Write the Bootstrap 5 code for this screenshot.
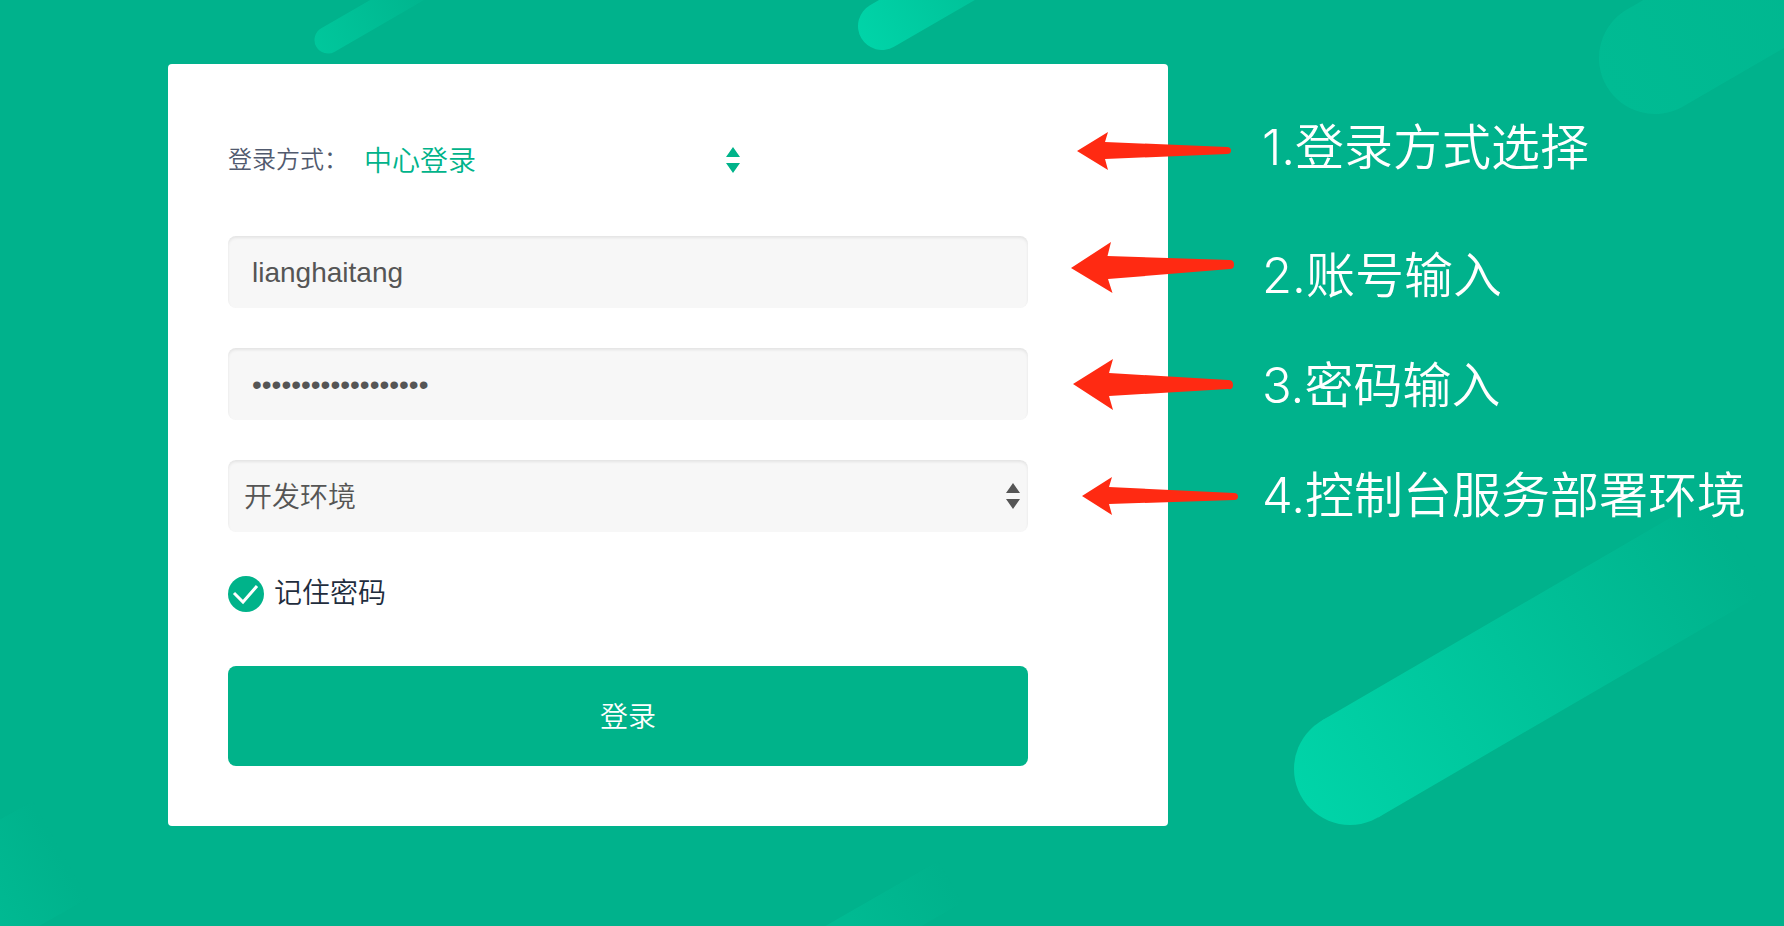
<!DOCTYPE html>
<html lang="zh-CN">
<head>
<meta charset="utf-8">
<meta name="viewport" content="width=device-width, initial-scale=1">
<title>登录</title>
<link href="https://cdn.jsdelivr.net/npm/bootstrap@5.3.0/dist/css/bootstrap.min.css" rel="stylesheet">
<style>
  :root { --brand: #00b38a; --field: #f7f7f7; }
  body { background: #00b28c; font-family: "Liberation Sans", "Noto Sans CJK SC", sans-serif; font-weight: 350; }
  .backdrop { z-index: -1; }
  .page { padding: 64px 24px 64px 168px; }
  .login-panel { flex: 0 1 1000px; min-width: 0; padding: 60px; border-radius: 4px; }
  .login-form { max-width: 800px; }
  .field-stack { gap: 40px; }
  .mode-row { height: 72px; }
  .mode-label { font-size: 24px; color: #515a6e; }
  .mode-select, .login-field, .remember, .login-btn { font-size: 28px; font-weight: 350; line-height: 40px; }
  .mode-select {
    width: 400px; padding: 4px 32px 0 16px; border: 0; color: var(--brand);
    background: transparent url("data:image/svg+xml,%3Csvg xmlns='http://www.w3.org/2000/svg' viewBox='0 0 14 26'%3E%3Cpath fill='%2300b38a' d='M7 0l7 10H0zM7 26l7-10H0z'/%3E%3C/svg%3E") no-repeat right 8px center / 14px 26px;
  }
  .login-field {
    height: 72px; padding: 2px 24px 0; border: 0; border-radius: 8px; color: #555;
    background-color: var(--field); box-shadow: inset 0 2px 3px rgba(0,0,0,.08);
  }
  .login-field:focus { background-color: var(--field); color: #555; }
  select.login-field {
    padding: 4px 32px 0 16px;
    background-image: url("data:image/svg+xml,%3Csvg xmlns='http://www.w3.org/2000/svg' viewBox='0 0 14 26'%3E%3Cpath fill='%23555' d='M7 0l7 10H0zM7 26l7-10H0z'/%3E%3C/svg%3E");
    background-position: right 8px center; background-size: 14px 26px;
  }
  .remember { height: 44px; gap: 10px; color: #1f2d3d; }
  .remember .form-check-input { width: 36px; height: 36px; margin: 0; border: 1px solid var(--brand); border-radius: 50%; }
  .remember .form-check-input:checked {
    border: 0; background-color: var(--brand); background-size: 36px 36px;
    background-image: url("data:image/svg+xml,%3Csvg xmlns='http://www.w3.org/2000/svg' viewBox='0 0 36 36'%3E%3Cpath fill='none' stroke='%23fff' stroke-width='3' d='M6 17l9 9L29 10'/%3E%3C/svg%3E");
  }
  .login-btn { height: 100px; margin-top: 10px; padding-top: 10px; border: 0; border-radius: 8px; color: #fff; background: var(--brand); }
  .login-btn:hover { color: #fff; background: #00a57f; }
  .notes { z-index: 1; flex: none; margin: 29px 0 0 -97px; font-size: 49px; line-height: 110px; font-family: Inter, "Noto Sans CJK SC", sans-serif; }
  .notes li { height: 110px; gap: 23px; }
  .notes li:first-child { margin-bottom: 18px; }
  .notes svg { width: 168px; height: 80px; fill: #ff2a12; flex: none; }
</style>
</head>
<body>
<svg class="backdrop position-fixed top-0 start-0 w-100 h-100" viewBox="0 0 1784 926" preserveAspectRatio="xMidYMid slice" aria-hidden="true">
  <defs>
    <linearGradient id="gBig" gradientUnits="userSpaceOnUse" x1="1302" y1="797" x2="1730" y2="547"><stop stop-color="#00d4a8"/><stop offset="1" stop-color="#00b28c"/></linearGradient>
    <linearGradient id="gTop" gradientUnits="userSpaceOnUse" x1="861" y1="38" x2="1060" y2="-76"><stop stop-color="#00d4a8"/><stop offset="1" stop-color="#00b28c"/></linearGradient>
    <linearGradient id="gSmall" gradientUnits="userSpaceOnUse" x1="316" y1="47" x2="436" y2="-22"><stop stop-color="#00c79c"/><stop offset="1" stop-color="#00b28c"/></linearGradient>
    <linearGradient id="gCorner" gradientUnits="userSpaceOnUse" x1="1606" y1="86" x2="1900" y2="-84"><stop stop-color="#00bb93"/><stop offset="1" stop-color="#00b58e"/></linearGradient>
    <linearGradient id="gLeft" gradientUnits="userSpaceOnUse" x1="-50" y1="917" x2="60" y2="856"><stop stop-color="#00bd95"/><stop offset="1" stop-color="#00b28c"/></linearGradient>
    <linearGradient id="gBottom" gradientUnits="userSpaceOnUse" x1="860" y1="936" x2="950" y2="884"><stop stop-color="#00ba92"/><stop offset="1" stop-color="#00b28c"/></linearGradient>
  </defs>
  <g fill="none" stroke-linecap="round">
    <path stroke="url(#gBig)" stroke-width="112" stroke-linecap="butt" d="M1350 769L1740 542"/>
    <circle cx="1350" cy="769" r="56" fill="url(#gBig)"/>
    <path stroke="url(#gTop)" stroke-width="48" d="M882 26L1060-77"/>
    <path stroke="url(#gSmall)" stroke-width="27" d="M328 40L430-19"/>
    <path stroke="url(#gCorner)" stroke-width="112" d="M1655 58L1900-84"/>
    <path stroke="url(#gLeft)" stroke-width="112" stroke-linecap="butt" d="M-150 968L60 850"/>
    <path stroke="url(#gBottom)" stroke-width="48" stroke-linecap="butt" d="M790 974L950 882"/>
  </g>
</svg>

<main class="page d-flex align-items-start">
  <section class="login-panel bg-white">
    <form class="login-form field-stack d-flex flex-column">
      <div class="mode-row d-flex align-items-center">
        <label class="mode-label" for="mode">登录方式：</label>
        <select class="mode-select form-select" id="mode"><option>中心登录</option></select>
      </div>
      <input class="login-field form-control" type="text" value="lianghaitang" aria-label="账号" autocomplete="username">
      <input class="login-field form-control" type="password" value="abcdefghijklmnopqr" aria-label="密码" autocomplete="current-password">
      <select class="login-field form-select" aria-label="环境"><option>开发环境</option></select>
      <div class="remember d-flex align-items-center">
        <input class="form-check-input" type="checkbox" id="remember" checked>
        <label for="remember">记住密码</label>
      </div>
      <button class="login-btn btn w-100" type="submit">登录</button>
    </form>
  </section>

  <ul class="notes list-unstyled text-white text-nowrap mb-0">
    <li class="d-flex align-items-center">
      <svg viewBox="0 0 168 80" aria-hidden="true"><path d="M6 43L37 24L34 34L156 39Q160 39 160 42.500T156 46L34 51L37 62Z"/></svg>
      <span>1.登录方式选择</span>
    </li>
    <li class="d-flex align-items-center">
      <svg viewBox="0 0 168 80" aria-hidden="true"><path d="M0 32L40 6L36.500 20L159 24Q163 24 163 28.500T159 33L37 43L41.500 57Z"/></svg>
      <span>2.账号输入</span>
    </li>
    <li class="d-flex align-items-center">
      <svg viewBox="0 0 168 80" aria-hidden="true"><path d="M2 38L42 13L38 27L157 34Q162 34 162 39T157 43L38 50L42 64Z"/></svg>
      <span>3.密码输入</span>
    </li>
    <li class="d-flex align-items-center">
      <svg viewBox="0 0 168 80" aria-hidden="true"><path d="M11 40L41 21L38 31L163 37Q167 37 167 40.500T163 44L38 48L41 59Z"/></svg>
      <span>4.控制台服务部署环境</span>
    </li>
  </ul>
</main>
<script src="https://cdn.jsdelivr.net/npm/bootstrap@5.3.0/dist/js/bootstrap.bundle.min.js"></script>
</body>
</html>
